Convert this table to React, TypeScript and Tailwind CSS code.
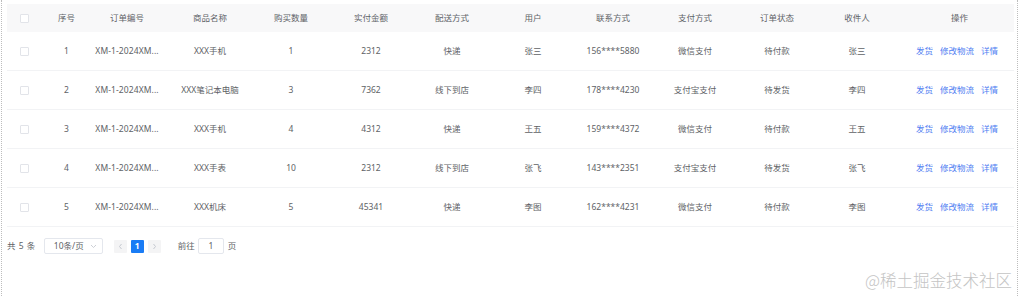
import React from "react";

const cols =
  "grid grid-cols-[34px_51px_70px_96px_66px_94px_68px_94px_66px_98px_66px_94px_111px]";

const heads = ["序号", "订单编号", "商品名称", "购买数量", "实付金额", "配送方式", "用户", "联系方式", "支付方式", "订单状态", "收件人", "操作"];

const rows = [
  ["1", "XM-1-2024XM...", "XXX手机", "1", "2312", "快递", "张三", "156****5880", "微信支付", "待付款", "张三"],
  ["2", "XM-1-2024XM...", "XXX笔记本电脑", "3", "7362", "线下到店", "李四", "178****4230", "支付宝支付", "待发货", "李四"],
  ["3", "XM-1-2024XM...", "XXX手机", "4", "4312", "快递", "王五", "159****4372", "微信支付", "待付款", "王五"],
  ["4", "XM-1-2024XM...", "XXX手表", "10", "2312", "线下到店", "张飞", "143****2351", "支付宝支付", "待发货", "张飞"],
  ["5", "XM-1-2024XM...", "XXX机床", "5", "45341", "快递", "李图", "162****4231", "微信支付", "待付款", "李图"],
];

function Check() {
  return <div className="w-[9px] h-[9px] border border-[#e2e4e9] rounded-[1px] bg-white" />;
}

export default function App() {
  return (
    <div
      className="relative w-[1020px] h-[296px] bg-white overflow-hidden"
      style={{ fontFamily: '"Noto Sans", "Noto Sans CJK SC", sans-serif' }}
    >
      <div className="h-full ml-px mr-[2px] border-l border-r border-dotted border-[#bdbdbd] pt-[4px] pl-[5px] pr-[3px]">
        <div className="text-[8.5px] text-[#606266]">
          <div className={`${cols} h-[28px] bg-[#f8f8f9] text-[#5f6368] items-center`}>
            <div className="flex justify-center">
              <Check />
            </div>
            {heads.map((h) => (
              <div key={h} className="text-center">
                {h}
              </div>
            ))}
          </div>
          {rows.map((r) => (
            <div key={r[0]} className={`${cols} h-[39px] items-center border-b border-[#f2f3f5]`}>
              <div className="flex justify-center">
                <Check />
              </div>
              <div className="text-center">{r[0]}</div>
              <div className="text-center whitespace-nowrap tracking-[0.1px]">{r[1]}</div>
              {r.slice(2).map((c, i) => (
                <div key={i} className="text-center whitespace-nowrap">
                  {c}
                </div>
              ))}
              <div className="flex justify-center gap-[7px] pr-[5px] text-[#4f7ef2]">
                <span>发货</span>
                <span>修改物流</span>
                <span>详情</span>
              </div>
            </div>
          ))}
          <div className="flex items-center h-[38px] text-[#606266]">
            <span className="mr-[8px] tracking-[0.5px]">共 5 条</span>
            <div className="w-[59px] h-[16px] border border-[#e4e7ed] rounded-[2px] flex items-center justify-between pl-[9px] pr-[5px]">
              <span>10条/页</span>
              <svg width="7" height="5" viewBox="0 0 7 5" fill="none">
                <path d="M1 1l2.5 2.5L6 1" stroke="#c0c4cc" strokeWidth="0.8" />
              </svg>
            </div>
            <div className="ml-[11px] w-[13px] h-[13px] bg-[#f4f4f5] rounded-[1px] flex items-center justify-center">
              <svg width="5" height="7" viewBox="0 0 5 7" fill="none">
                <path d="M3.5 1L1.5 3.5L3.5 6" stroke="#c0c4cc" strokeWidth="0.9" />
              </svg>
            </div>
            <div className="ml-[4px] w-[13px] h-[13px] bg-[#1a7cf5] rounded-[1px] flex items-center justify-center text-white font-bold">
              1
            </div>
            <div className="ml-[4px] w-[13px] h-[13px] bg-[#f4f4f5] rounded-[1px] flex items-center justify-center">
              <svg width="5" height="7" viewBox="0 0 5 7" fill="none">
                <path d="M1.5 1L3.5 3.5L1.5 6" stroke="#c0c4cc" strokeWidth="0.9" />
              </svg>
            </div>
            <span className="ml-[17px]">前往</span>
            <div className="ml-[3px] w-[26px] h-[16px] border border-[#e4e7ed] rounded-[2px] flex items-center justify-center">
              1
            </div>
            <span className="ml-[4px]">页</span>
          </div>
        </div>
      </div>
      <div
        className="absolute right-[8px] bottom-[8px] text-[16.5px] leading-none text-[#c4c4c4]"
        style={{ fontFamily: '"Noto Sans CJK SC", sans-serif', fontWeight: 300 }}
      >
        @稀土掘金技术社区
      </div>
    </div>
  );
}
